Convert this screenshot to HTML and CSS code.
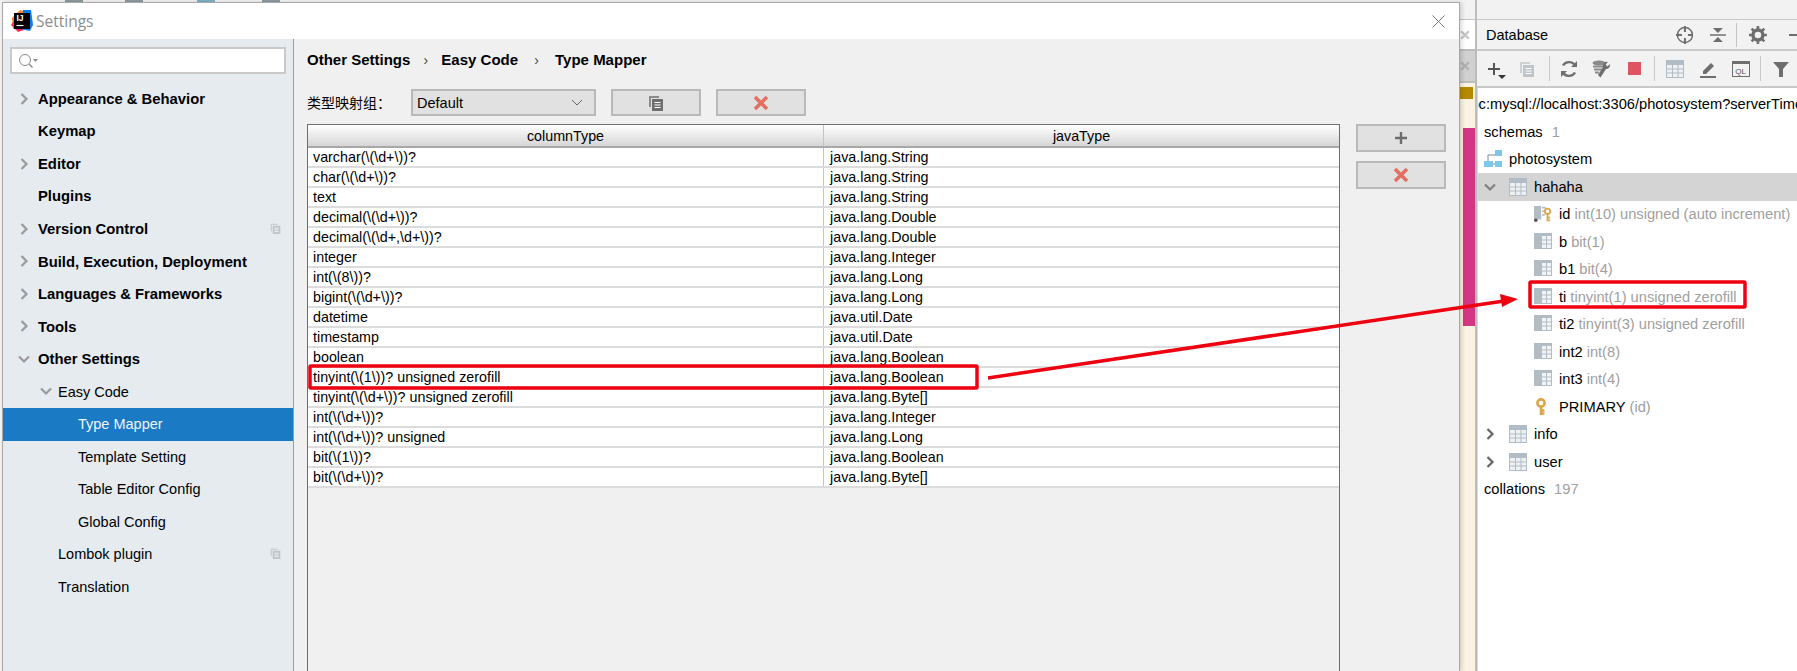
FILE: index.html
```html
<!DOCTYPE html>
<html lang="zh">
<head>
    <meta charset="UTF-8">
    <title>Settings</title>
    <link rel="stylesheet" href="styles.css">
</head>
<body>
    <!-- iconos reutilizados -->
    <svg class="defs" width="0" height="0">
        <symbol id="i-copy" viewBox="0 0 16 16">
            <path d="M1 1h10v2H3v9H1z" fill="currentColor" opacity=".75"/>
            <path d="M4 4h11v12H4z" fill="currentColor"/>
            <path d="M6.5 7.5h6M6.5 10h6M6.5 12.5h6" stroke="#fff" stroke-width="1" fill="none"/>
        </symbol>
        <symbol id="i-x" viewBox="0 0 16 16">
            <path d="M2 2l12 12M14 2L2 14" stroke="currentColor" stroke-width="3.6" fill="none"/>
        </symbol>
        <symbol id="i-right" viewBox="0 0 12 12">
            <path d="M3.5 1l5 5-5 5" stroke="currentColor" stroke-width="2.2" fill="none"/>
        </symbol>
        <symbol id="i-down" viewBox="0 0 12 12">
            <path d="M1 3.5l5 5 5-5" stroke="currentColor" stroke-width="2.2" fill="none"/>
        </symbol>
        <symbol id="i-table" viewBox="0 0 18 18">
            <path d="M0 0h18v18H0z" fill="#b2bcc4"/>
            <path d="M1 5h16v12H1z" fill="#eef1f3"/>
            <path d="M6.5 5v12M12 5v12M1 9h16M1 13h16" stroke="#b2bcc4" stroke-width="1" fill="none"/>
        </symbol>
        <symbol id="i-col" viewBox="0 0 18 18">
            <path d="M0 0h7v16H0z" fill="#b2bcc4"/>
            <path d="M7 0h11v16H7z" fill="#b2bcc4"/>
            <path d="M8 3h9v12H8z" fill="#f2f4f5"/>
            <path d="M12.5 3v12M8 7h9M8 11h9" stroke="#b2bcc4" stroke-width="1" fill="none"/>
        </symbol>
        <symbol id="i-key" viewBox="0 0 18 18">
            <circle cx="7" cy="5" r="3.6" fill="none" stroke="#dca648" stroke-width="2.6"/>
            <path d="M7 8v9M7 12.5h3.5M7 15.5h3.5" stroke="#dca648" stroke-width="2.6" fill="none"/>
        </symbol>
    </svg>

    <!-- lo que queda detras del dialogo -->
    <div class="desktop">
        <div class="backdrop">
            <div class="tab-strip">
                <div class="tab tab-white"><svg class="tab-x"><use href="#i-x"/></svg></div>
                <div class="tab tab-gray"><svg class="tab-x"><use href="#i-x"/></svg></div>
                <div class="editor-strip">
                    <span class="mark-gold"></span>
                    <span class="mark-pink"></span>
                </div>
            </div>
        </div>

        <!-- Panel Database -->
        <div class="db-panel">
            <div class="db-head">
                <span class="db-title">Database</span>
                <svg class="head-ico" viewBox="0 0 18 18" width="18" height="18"><circle cx="9" cy="9" r="7.6" fill="none" stroke="#6e6e6e" stroke-width="1.5"/><path d="M9 0v6M9 12v6M0 9h6M12 9h6" stroke="#6e6e6e" stroke-width="2"/></svg>
                <svg class="head-ico ico-collapse" viewBox="0 0 18 18" width="18" height="18"><path d="M1 9h16" stroke="#6e6e6e" stroke-width="1.5"/><path d="M9 7L4 2h10zM9 11l-5 5h10z" fill="#6e6e6e"/></svg>
                <span class="head-sep"></span>
                <svg class="head-ico ico-gear" viewBox="0 0 18 18" width="18" height="18"><circle cx="9" cy="9" r="5" fill="none" stroke="#6e6e6e" stroke-width="3.4"/><path d="M9 0v4M9 14v4M0 9h4M14 9h4M2.6 2.6l3 3M12.4 12.4l3 3M15.4 2.6l-3 3M5.6 12.4l-3 3" stroke="#6e6e6e" stroke-width="2.6"/></svg>
                <span class="head-min"></span>
            </div>
            <div class="db-tools">
                <span class="tool tool-add">
                    <svg viewBox="0 0 18 18" width="18" height="18"><path d="M9 3v12M3 9h12" stroke="#555" stroke-width="2"/></svg>
                    <i class="tool-drop"></i>
                </span>
                <span class="tool tool-off"><svg width="16" height="16"><use href="#i-copy"/></svg></span>
                <span class="tool-sep"></span>
                <span class="tool"><svg viewBox="0 0 18 18" width="18" height="18"><path d="M15.5 6.5A7 7 0 0 0 3 5.500M2.500 11.500A7 7 0 0 0 15 12.500" stroke="#6e6e6e" stroke-width="2.400" fill="none"/><path d="M17 1v6h-6zM1 17v-6h6z" fill="#6e6e6e"/></svg></span>
                <span class="tool"><svg viewBox="0 0 20 18" width="20" height="18"><ellipse cx="7" cy="3" rx="6.500" ry="2.500" fill="#8a8a8a"/><path d="M1 6.500h11M2 9.500h8M3 12.500h4" stroke="#8a8a8a" stroke-width="2"/><path d="M18 4l-2.500 2.500-2-2L16 2a4 4 0 0 0-5 5L6 15l2.500 2.500L14 9a4 4 0 0 0 4-5z" fill="#6e6e6e"/></svg></span>
                <span class="tool tool-stop"><i class="stop"></i></span>
                <span class="tool-sep"></span>
                <span class="tool"><svg width="18" height="18"><use href="#i-table"/></svg></span>
                <span class="tool"><svg viewBox="0 0 18 18" width="18" height="18"><path d="M4 11l8-8 3 3-8 8H4z" fill="#6e6e6e"/><path d="M1 17h16" stroke="#6e6e6e" stroke-width="2"/></svg></span>
                <span class="tool"><span class="ql">QL</span></span>
                <span class="tool-sep"></span>
                <span class="tool"><svg viewBox="0 0 16 16" width="16" height="16"><path d="M0 1h16L10 8v8H6V8z" fill="#6e6e6e"/></svg></span>
            </div>
            <div class="db-tree">
                <div class="db-url"><span>jdbc:mysql://localhost:3306/photosystem?serverTimezone=UTC</span></div>
                <div class="node">schemas <em class="count">1</em></div>
                <div class="node">
                    <svg class="node-ico" viewBox="0 0 18 18" width="18" height="18"><path d="M11 0h7v6h-7zM11 11h7v6h-7zM0 11h9v6H0z" fill="#7bc8ea"/><path d="M4 11V5h7M9 14h2" stroke="#7d8b95" stroke-width="1" fill="none"/></svg>
                    photosystem
                </div>
                <div class="node node-sel">
                    <svg class="arrow arrow-down"><use href="#i-down"/></svg>
                    <svg class="node-ico"><use href="#i-table"/></svg>
                    hahaha
                </div>
                <div class="node depth2">
                    <svg class="node-ico" viewBox="0 0 20 18" width="18" height="18"><path d="M0 0h8v15H0zM9 1h4v2H9zM9 5h3v2H9zM9 9h3v2H9z" fill="#b2bcc4"/><circle cx="2" cy="16" r="2" fill="#555"/><circle cx="15" cy="6" r="3" fill="none" stroke="#dca648" stroke-width="2"/><path d="M15 9v8M15 13h3M15 16h3" stroke="#dca648" stroke-width="2"/></svg>
                    id <em>int(10) unsigned (auto increment)</em>
                </div>
                <div class="node depth2"><svg class="node-ico"><use href="#i-col"/></svg>b <em>bit(1)</em></div>
                <div class="node depth2"><svg class="node-ico"><use href="#i-col"/></svg>b1 <em>bit(4)</em></div>
                <div class="node depth2"><svg class="node-ico"><use href="#i-col"/></svg>ti <em>tinyint(1) unsigned zerofill</em></div>
                <div class="node depth2"><svg class="node-ico"><use href="#i-col"/></svg>ti2 <em>tinyint(3) unsigned zerofill</em></div>
                <div class="node depth2"><svg class="node-ico"><use href="#i-col"/></svg>int2 <em>int(8)</em></div>
                <div class="node depth2"><svg class="node-ico"><use href="#i-col"/></svg>int3 <em>int(4)</em></div>
                <div class="node depth2"><svg class="node-ico"><use href="#i-key"/></svg>PRIMARY <em>(id)</em></div>
                <div class="node node-child">
                    <svg class="arrow arrow-right"><use href="#i-right"/></svg>
                    <svg class="node-ico"><use href="#i-table"/></svg>
                    info
                </div>
                <div class="node node-child">
                    <svg class="arrow arrow-right"><use href="#i-right"/></svg>
                    <svg class="node-ico"><use href="#i-table"/></svg>
                    user
                </div>
                <div class="node">collations <em class="count">197</em></div>
            </div>
        </div>
    </div>

    <!-- Dialogo Settings -->
    <div class="dialog">
        <div class="title-bar">
            <svg class="logo" viewBox="0 0 22 22" width="22" height="22">
                <path d="M1 8L9 0l6 2-8 14-5 3z" fill="#fc801d"/>
                <path d="M0 15L8 4l5 16-6 2z" fill="#fe2857"/>
                <path d="M12 0h8l2 15-3 6-9-2z" fill="#087cfa"/>
                <path d="M3 3h16v16H3z" fill="#000"/>
                <text class="logo-text" x="5.500" y="11">IJ</text>
                <path d="M5.500 15.500h7" stroke="#fff" stroke-width="1.200"/>
            </svg>
            <span class="title-text">Settings</span>
            <svg class="close" viewBox="0 0 13 13" width="13" height="13"><path d="M.5.5l12 12M12.500.5l-12 12" stroke="#777" stroke-width="1" fill="none"/></svg>
        </div>
        <div class="dialog-body">
            <div class="sidebar">
                <div class="search">
                    <svg viewBox="0 0 20 16" width="20" height="16"><circle cx="7" cy="7" r="5.500" fill="none" stroke="#8c8c8c" stroke-width="1"/><path d="M11 11l3.500 3.500" stroke="#8c8c8c" stroke-width="1.400"/><path d="M15 6h5l-2.500 3z" fill="#8c8c8c"/></svg>
                </div>
                <ul class="menu">
                    <li class="item bold"><svg class="tw"><use href="#i-right"/></svg>Appearance &amp; Behavior</li>
                    <li class="item bold">Keymap</li>
                    <li class="item bold"><svg class="tw"><use href="#i-right"/></svg>Editor</li>
                    <li class="item bold">Plugins</li>
                    <li class="item bold"><svg class="tw"><use href="#i-right"/></svg>Version Control<svg class="proj"><use href="#i-copy"/></svg></li>
                    <li class="item bold"><svg class="tw"><use href="#i-right"/></svg>Build, Execution, Deployment</li>
                    <li class="item bold"><svg class="tw"><use href="#i-right"/></svg>Languages &amp; Frameworks</li>
                    <li class="item bold"><svg class="tw"><use href="#i-right"/></svg>Tools</li>
                    <li class="item bold"><svg class="tw"><use href="#i-down"/></svg>Other Settings</li>
                    <li class="item lvl1"><svg class="tw"><use href="#i-down"/></svg>Easy Code</li>
                    <li class="item lvl2 active">Type Mapper</li>
                    <li class="item lvl2">Template Setting</li>
                    <li class="item lvl2">Table Editor Config</li>
                    <li class="item lvl2">Global Config</li>
                    <li class="item lvl1">Lombok plugin<svg class="proj"><use href="#i-copy"/></svg></li>
                    <li class="item lvl1">Translation</li>
                </ul>
            </div>
            <div class="main">
                <div class="crumbs">
                    <span>Other Settings</span><i>›</i><span>Easy Code</span><i class="wide">›</i><span>Type Mapper</span>
                </div>
                <div class="group-row">
                    <label class="group-label">类型映射组：</label>
                    <div class="combo">Default
                        <svg viewBox="0 0 12 8" width="12" height="8"><path d="M1 1l5 5 5-5" stroke="#666" stroke-width="1" fill="none"/></svg>
                    </div>
                    <button class="btn btn-wide icon-dark"><svg width="16" height="16"><use href="#i-copy"/></svg></button>
                    <button class="btn btn-wide icon-red"><svg width="16" height="16"><use href="#i-x"/></svg></button>
                </div>
                <div class="table-row">
                    <div class="table-box">
                        <table class="mapper">
                            <thead>
                                <tr><th>columnType</th><th>javaType</th></tr>
                            </thead>
                            <tbody>
                                <tr><td>varchar(\(\d+\))?</td><td>java.lang.String</td></tr>
                                <tr><td>char(\(\d+\))?</td><td>java.lang.String</td></tr>
                                <tr><td>text</td><td>java.lang.String</td></tr>
                                <tr><td>decimal(\(\d+\))?</td><td>java.lang.Double</td></tr>
                                <tr><td>decimal(\(\d+,\d+\))?</td><td>java.lang.Double</td></tr>
                                <tr><td>integer</td><td>java.lang.Integer</td></tr>
                                <tr><td>int(\(8\))?</td><td>java.lang.Long</td></tr>
                                <tr><td>bigint(\(\d+\))?</td><td>java.lang.Long</td></tr>
                                <tr><td>datetime</td><td>java.util.Date</td></tr>
                                <tr><td>timestamp</td><td>java.util.Date</td></tr>
                                <tr><td>boolean</td><td>java.lang.Boolean</td></tr>
                                <tr><td>tinyint(\(1\))? unsigned zerofill</td><td>java.lang.Boolean</td></tr>
                                <tr><td>tinyint(\(\d+\))? unsigned zerofill</td><td>java.lang.Byte[]</td></tr>
                                <tr><td>int(\(\d+\))?</td><td>java.lang.Integer</td></tr>
                                <tr><td>int(\(\d+\))? unsigned</td><td>java.lang.Long</td></tr>
                                <tr><td>bit(\(1\))?</td><td>java.lang.Boolean</td></tr>
                                <tr><td>bit(\(\d+\))?</td><td>java.lang.Byte[]</td></tr>
                            </tbody>
                        </table>
                    </div>
                    <div class="side-btns">
                        <button class="btn btn-side icon-dark"><svg viewBox="0 0 14 14" width="14" height="14"><path d="M7 1v12M1 7h12" stroke="currentColor" stroke-width="2.400"/></svg></button>
                        <button class="btn btn-side icon-red"><svg width="16" height="16"><use href="#i-x"/></svg></button>
                    </div>
                </div>
            </div>
        </div>
    </div>

    <!-- Anotaciones rojas sobre la captura -->
    <svg class="notes" viewBox="0 0 1797 671" width="1797" height="671">
        <rect x="310" y="366" width="667" height="22" rx="1" fill="none" stroke="#ee0010" stroke-width="3.500"/>
        <rect x="1530" y="282" width="215" height="25" rx="1" fill="none" stroke="#ee0010" stroke-width="3.500"/>
        <path d="M988 378L1504 301" stroke="#ee0010" stroke-width="3.500" fill="none"/>
        <path d="M1518 299l-18-5 2 13z" fill="#ee0010"/>
    </svg>
</body>
</html>
```

FILE: styles.css
```css
* {
    box-sizing: border-box;
}
html, body {
    margin: 0;
    height: 100%;
    overflow: hidden;
}
body {
    position: relative;
    width: 1797px;
    height: 671px;
    background-color: #f2f2f2;
    font-family: "Liberation Sans", Arial, sans-serif;
    font-size: 14.5px;
    color: #000;
}
.defs {
    position: absolute;
}

/* Fondo: pestanas, editor y panel */
.desktop {
    display: flex;
    height: 100%;
}
.backdrop {
    width: 1477px;
    display: flex;
    justify-content: flex-end;
    background: linear-gradient(90deg, #f2f2f2 65px, #8c9aa0 65px, #8c9aa0 83px, #f2f2f2 83px, #f2f2f2 125px, #8c9aa0 125px, #8c9aa0 143px, #f2f2f2 143px, #f2f2f2 197px, #7fb0c4 197px, #7fb0c4 215px, #f2f2f2 215px, #f2f2f2 262px, #8c9aa0 262px, #8c9aa0 280px, #f2f2f2 280px) no-repeat top left / 100% 2px;
}
.tab-strip {
    width: 80px;
    padding-top: 19px;
    display: flex;
    flex-direction: column;
    border-right: 2px solid #bcbcbc;
}
.tab {
    height: 32px;
    display: flex;
    justify-content: flex-end;
    align-items: center;
    padding-right: 5px;
    border-bottom: 2px solid #bcbcbc;
    color: #c4c4c4;
}
.tab-white {
    background-color: #fff;
    border-top: 1px solid #c4c4c4;
}
.tab-gray {
    background-color: #d0d0d0;
    color: #b0b0b0;
}
.tab-x {
    width: 10px;
    height: 10px;
}
.editor-strip {
    flex: 1;
    position: relative;
    background-color: #faf3e2;
}
.mark-gold {
    position: absolute;
    top: 4px;
    right: 2px;
    width: 14px;
    height: 12px;
    background-color: #b58900;
}
.mark-pink {
    position: absolute;
    top: 45px;
    right: 0;
    width: 12px;
    height: 198px;
    background-color: #d33682;
}

/* Panel Database */
.db-panel {
    flex: 1;
    min-width: 0;
    display: flex;
    flex-direction: column;
    padding-top: 19px;
    overflow: hidden;
}
.db-head {
    height: 32px;
    display: flex;
    align-items: center;
    padding-left: 9px;
    border-top: 1px solid #c9c9c9;
    border-bottom: 2px solid #c9c9c9;
}
.db-title {
    width: 191px;
}
.ico-collapse {
    margin-left: 16px;
}
.head-sep {
    width: 1px;
    height: 24px;
    margin: 0 12px 0 9px;
    background-color: #c4c4c4;
}
.head-min {
    width: 8px;
    height: 2px;
    margin-left: 22px;
    background-color: #6e6e6e;
}
.db-tools {
    height: 37px;
    display: flex;
    align-items: center;
    padding-left: 1px;
    border-bottom: 2px solid #c9c9c9;
}
.tool {
    position: relative;
    width: 33px;
    display: flex;
    justify-content: center;
    align-items: center;
}
.tool-off {
    margin-right: 2px;
    color: #bfc5ca;
}
.tool-drop {
    position: absolute;
    left: 20px;
    top: 15px;
    border-left: 4px solid transparent;
    border-right: 4px solid transparent;
    border-top: 4px solid #333;
}
.tool-sep {
    width: 1px;
    height: 25px;
    margin: 0 3px 0 3px;
    background-color: #c9c9c9;
}
.tool-stop {
    margin-left: -1px;
    margin-right: 1px;
}
.stop {
    width: 13px;
    height: 13px;
    background-color: #de5460;
}
.ql {
    width: 18px;
    height: 16px;
    padding-top: 4px;
    border: 1px solid #6e6e6e;
    border-top-width: 3px;
    font-size: 8px;
    line-height: 7px;
    text-align: center;
    color: #555;
}
.db-tree {
    flex: 1;
    background-color: #fff;
    border-left: 1px solid #d8d8d8;
}
.db-url {
    height: 30px;
    line-height: 32px;
    white-space: nowrap;
    overflow: hidden;
    font-size: 14.67px;
}
.db-url span {
    margin-left: -19px;
}
.node {
    height: 27.5px;
    display: flex;
    align-items: center;
    padding-left: 6px;
    font-size: 14.67px;
    white-space: nowrap;
}
.node em {
    margin-left: 4px;
    font-style: normal;
    color: #a0a0a0;
}
.node em.count {
    margin-left: 9px;
}
.node-ico {
    width: 18px;
    height: 18px;
    margin-right: 7px;
    flex: none;
}
.node-sel {
    background-color: #d4d4d4;
}
.arrow {
    width: 12px;
    height: 12px;
    margin-right: 13px;
    color: #808080;
    flex: none;
}
.arrow-right {
    color: #666;
}
.depth2 {
    padding-left: 56px;
}

/* Dialogo */
.dialog {
    position: absolute;
    left: 2px;
    top: 2px;
    bottom: 0;
    width: 1458px;
    display: flex;
    flex-direction: column;
    background-color: #f0f0f0;
    border: 1px solid #a8a8a8;
    border-bottom: none;
    box-shadow: 2px 0 4px rgba(0, 0, 0, 0.15);
}
.title-bar {
    height: 36px;
    flex: none;
    display: flex;
    align-items: center;
    padding-left: 8px;
    background-color: #fff;
}
.logo {
    margin-right: 3px;
}
.logo-text {
    font-size: 8.5px;
    font-weight: bold;
    fill: #fff;
}
.title-text {
    flex: 1;
    font-family: "Open Sans", sans-serif;
    font-size: 15.5px;
    color: #8c8c8c;
}
.close {
    margin-right: 14px;
}
.dialog-body {
    flex: 1;
    min-height: 0;
    display: flex;
}
.sidebar {
    width: 291px;
    flex: none;
    padding-top: 8px;
    background-color: #e6ebf0;
    border-right: 1px solid #9c9c9c;
}
.search {
    height: 27px;
    margin: 0 7px;
    padding: 4px 0 0 6px;
    background-color: #fff;
    border: 2px solid #c9c9c9;
}
.menu {
    list-style: none;
    margin: 0;
    padding: 8.5px 0 0;
}
.item {
    position: relative;
    height: 32.55px;
    display: flex;
    align-items: center;
    padding-left: 35px;
    color: #000;
}
.bold {
    font-weight: bold;
    font-size: 14.8px;
}
.lvl1 {
    padding-left: 55px;
}
.lvl2 {
    padding-left: 75px;
}
.active {
    background-color: #1a7bc4;
    color: #f0f6fb;
}
.tw {
    position: absolute;
    left: 15px;
    top: 10px;
    width: 12px;
    height: 12px;
    color: #9a9a9a;
}
.lvl1 .tw {
    left: 37px;
}
.proj {
    position: absolute;
    right: 12px;
    top: 10px;
    width: 11px;
    height: 11px;
    color: #bfc5ca;
}

/* Contenido */
.main {
    flex: 1;
    min-width: 0;
    display: flex;
    flex-direction: column;
    padding-left: 13px;
}
.crumbs {
    height: 41px;
    display: flex;
    align-items: center;
    font-weight: bold;
    font-size: 15px;
}
.crumbs i {
    width: 31px;
    text-align: center;
    font-style: normal;
    font-weight: normal;
    font-size: 14px;
    color: #444;
}
.crumbs i.wide {
    width: 37px;
}
.group-row {
    height: 44px;
    display: flex;
    align-items: flex-start;
    padding-top: 9px;
}
.group-label {
    width: 104px;
    line-height: 27px;
    font-family: "Noto Sans CJK SC", sans-serif;
    font-size: 14px;
}
.combo {
    width: 185px;
    height: 27px;
    margin-right: 15px;
    display: flex;
    align-items: center;
    justify-content: space-between;
    padding: 0 11px 0 4px;
    background-color: #e1e1e1;
    border: 2px solid #b9b9b9;
}
.btn {
    display: flex;
    justify-content: center;
    align-items: center;
    padding: 0;
    background-color: #e1e1e1;
    border: 2px solid #b9b9b9;
}
.btn-wide {
    width: 90px;
    height: 27px;
    margin-right: 15px;
}
.icon-dark {
    color: #6e6e6e;
}
.icon-red {
    color: #e36f61;
}
.table-row {
    flex: 1;
    min-height: 0;
    display: flex;
}
.table-box {
    width: 1033px;
    flex: none;
    border: 1px solid #6e6e6e;
    border-bottom: none;
}
.mapper {
    width: 100%;
    table-layout: fixed;
    border-collapse: collapse;
}
.mapper th {
    height: 22px;
    padding: 0;
    font-weight: normal;
    font-size: 14.3px;
    background: linear-gradient(#ffffff, #d6d6d6);
    border-bottom: 2px solid #a8a8a8;
}
.mapper th + th, .mapper td + td {
    border-left: 1px solid #c4c4c4;
}
.mapper td {
    height: 20px;
    padding: 0 0 0 5px;
    font-size: 14.3px;
    line-height: 18px;
    background-color: #fff;
    border-bottom: 2px solid #dcdcdc;
    white-space: nowrap;
}
.mapper td + td {
    padding-left: 6px;
}
.side-btns {
    margin-left: 16px;
    display: flex;
    flex-direction: column;
    gap: 9px;
}
.btn-side {
    width: 90px;
    height: 28px;
}

/* Anotaciones */
.notes {
    position: absolute;
    left: 0;
    top: 0;
    pointer-events: none;
}
```
